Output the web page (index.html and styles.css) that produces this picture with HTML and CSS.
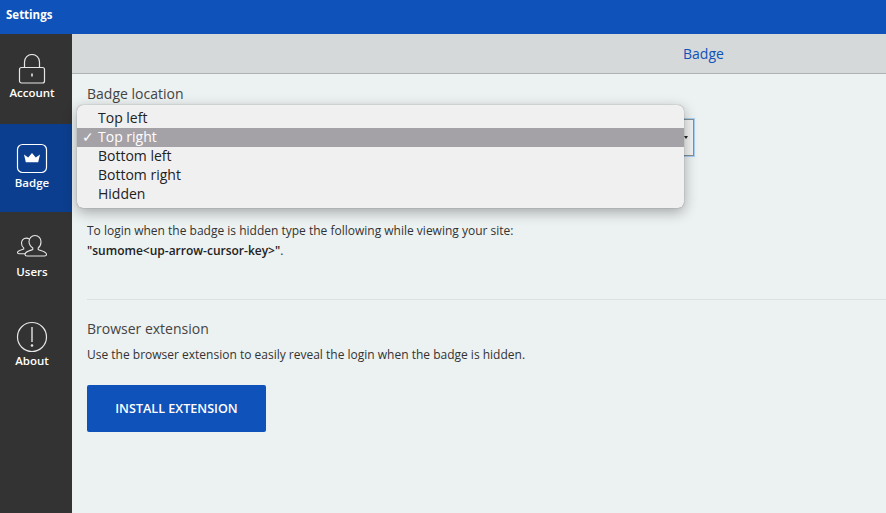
FILE: index.html
```html
<!DOCTYPE html>
<html lang="en">
<head>
<meta charset="utf-8">
<title>Settings</title>
<link rel="stylesheet" href="styles.css">
</head>
<body>
<header class="topbar">Settings</header>
<div class="layout">
  <nav class="sidebar">
    <a class="nav-item nav-account">
      <svg class="nav-icon" width="36" height="30" viewBox="0 2 36 30" fill="none" stroke="#e6e6e6" stroke-width="1.2">
        <path d="M10.500 15.500V10a7.500 7.500 0 0 1 15 0v5.500"/>
        <rect x="5.500" y="15.500" width="25" height="15.500" rx="2"/>
        <path d="M18 21.500v3" stroke-width="1.600"/>
      </svg>
      <span>Account</span>
    </a>
    <a class="nav-item nav-badge active">
      <svg class="nav-icon" width="32" height="32" viewBox="0 0 32 32" fill="none">
        <rect x="1.500" y="1.500" width="29" height="28" rx="5" stroke="#fff" stroke-width="1.200"/>
        <path d="M8 11.500l4.200 3L16 10l3.800 4.500 4.200-3-1.800 7.800H9.800z" fill="#fff"/>
      </svg>
      <span>Badge</span>
    </a>
    <a class="nav-item nav-users">
      <svg class="nav-icon" width="32" height="26" viewBox="0 0 32 26" fill="none" stroke="#e6e6e6" stroke-width="1.100">
        <path d="M19 2.500c3.600 0 6 2.800 6 6.300 0 2.700-1.100 5-2.800 6.200v1.500c2.500 1.200 8.300 1.900 8.300 4.900 0 1-.9 1.600-2 1.600H11c-1.200 0-2-.6-2-1.600 0-3 5.300-3.700 7.800-4.900V15c-1.700-1.200-3.800-3.500-3.800-6.200 0-3.500 2.400-6.300 6-6.300z"/>
        <path d="M13.500 6.100c-1.100-.7-2.100-1-3.200-1-2.900 0-4.800 2.200-4.800 5 0 2 .9 3.800 2.200 4.800v1.200C5.500 17 1.500 17.500 1.500 19.500c0 .8.600 1.200 1.500 1.200h6.500"/>
      </svg>
      <span>Users</span>
    </a>
    <a class="nav-item nav-about">
      <svg class="nav-icon" width="32" height="32" viewBox="0 0 32 32" fill="none" stroke="#e6e6e6" stroke-width="1.200">
        <circle cx="16" cy="16" r="14.500"/>
        <path d="M16 6v15" stroke-width="1.400"/>
        <circle cx="16" cy="24.500" r="1.300" fill="#e6e6e6" stroke="none"/>
      </svg>
      <span>About</span>
    </a>
  </nav>
  <main class="content">
    <div class="tabbar"><span class="tab-title">Badge</span></div>
    <section class="panel">
      <h2 class="label label-location">Badge location</h2>
      <div class="select-box"><span class="caret"></span></div>
      <ul class="menu">
        <li>Top left</li>
        <li class="selected"><span class="check">✓</span>Top right</li>
        <li>Bottom left</li>
        <li>Bottom right</li>
        <li>Hidden</li>
      </ul>
      <p class="copy copy-login">To login when the badge is hidden type the following while viewing your site:<br><strong>"sumome&lt;up-arrow-cursor-key&gt;"</strong>.</p>
      <hr class="divider">
      <h2 class="label">Browser extension</h2>
      <p class="copy copy-ext">Use the browser extension to easily reveal the login when the badge is hidden.</p>
      <button class="install" type="button">INSTALL EXTENSION</button>
    </section>
  </main>
</div>
</body>
</html>
```
FILE: styles.css
```css
* { box-sizing: border-box; }
html, body { margin: 0; padding: 0; height: 513px; overflow: hidden; }
body { font-family: "Open Sans", sans-serif; color: #333; background: #ecf1f1; }

.topbar {
  height: 34px;
  background: #0f52b9;
  color: #fff;
  font-size: 11.500px;
  font-weight: 700;
  line-height: 29px;
  padding-left: 6px;
}

.layout { display: flex; height: 479px; }

.sidebar { width: 72px; flex: none; background: #333; }
.nav-item {
  display: flex;
  flex-direction: column;
  align-items: center;
  padding-right: 8px;
  color: #fff;
  font-size: 11.500px;
  font-weight: 600;
  line-height: 16px;
}
.nav-icon { display: block; flex: none; }
.nav-account { height: 90px; padding-top: 20px; }
.nav-account span { margin-top: 1px; }
.nav-badge { height: 88px; padding-top: 19px; }
.nav-users { height: 89px; padding-top: 21px; }
.nav-users span { margin-top: 5px; }
.nav-about { height: 89px; padding-top: 20px; }
.active { background: #0c3e8f; }

.content { flex: 1; min-width: 0; }
.tabbar {
  height: 40px;
  background: #d5d9d9;
  border-bottom: 1px solid #aeb1b1;
  padding-left: 611px;
  line-height: 40px;
  font-size: 14px;
}
.tab-title { color: #0f52b9; }

.panel { position: relative; padding: 10px 0 0 15px; }
.label { margin: 0; font-size: 14px; font-weight: 400; line-height: 20px; color: #444; }

.select-box {
  width: 607px;
  height: 37px;
  margin-top: 15px;
  border: 1px solid #8a8f92;
  box-shadow: 0 0 0 1px #a8d0f0;
  position: relative;
  background: #f2f4f4;
}
.caret {
  position: absolute;
  right: 5px;
  top: 16px;
  border: 2.500px solid transparent;
  border-top: 3px solid #222;
  border-bottom: 0;
}

.menu {
  position: absolute;
  left: 5px;
  top: 31px;
  width: 607px;
  height: 103px;
  margin: 0;
  padding: 4px 0;
  list-style: none;
  background: #f0f0f0;
  border-radius: 6px;
  box-shadow: 0 0 1px rgba(0,0,0,.5), 0 4px 14px rgba(0,0,0,.32);
  font-size: 14px;
  line-height: 18px;
  color: #222;
}
.menu li { position: relative; padding-left: 21px; height: 19px; }
.menu .selected { background: #a5a2a7; color: #fff; }
.check { position: absolute; left: 5px; top: 0; font-size: 14px; }

.copy { margin: 0; font-size: 12px; line-height: 20px; color: #333; }
.copy-login { margin-top: 65px; }
.copy strong { font-weight: 600; color: #222; }

.divider { height: 1px; border: 0; background: #dde1e1; margin: 38px 0 19px; }
.copy-ext { margin-top: 6px; }

.install {
  display: block;
  width: 179px;
  height: 47px;
  margin-top: 20px;
  border: 0;
  border-radius: 2px;
  background: #0f52b9;
  color: #fff;
  font-family: inherit;
  font-size: 12.600px;
  font-weight: 600;
  padding: 0;
}
```
